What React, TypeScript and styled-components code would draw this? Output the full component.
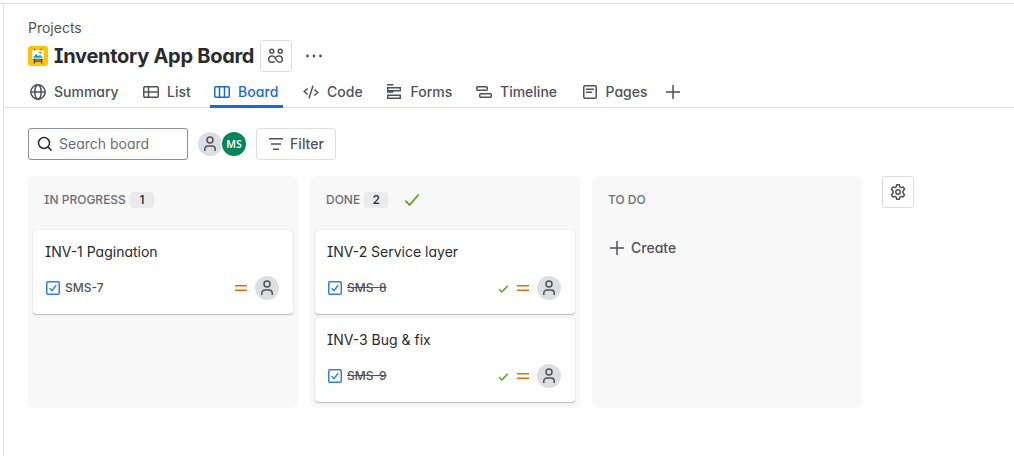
import React from 'react';
import styled, { createGlobalStyle } from 'styled-components';

const GlobalStyle = createGlobalStyle`
  *, *::before, *::after { box-sizing: border-box; }
  body {
    margin: 0;
    background: #fff;
    color: #292a2e;
    font-family: Inter, "Liberation Sans", sans-serif;
    font-feature-settings: 'cv11' 1, 'cv08' 1;
    font-size: 14px;
    line-height: 20px;
  }
  svg { display: block; flex: none; }
`;

const Page = styled.div`
  height: 456px;
  padding-top: 3px;
  overflow: hidden;
`;

const Shell = styled.div`
  height: 453px;
  border-top: 1px solid #dddee1;
  padding-left: 3px;
`;

const Main = styled.main`
  height: 452px;
  border-left: 1px solid #dddee1;
`;

const Header = styled.header`
  padding: 14px 0 0 24px;
  border-bottom: 1px solid #dddee1;
  height: 104px;
`;

const Label = styled.span<{ $track?: number }>`
  letter-spacing: ${(p) => p.$track ?? 0}px;
  white-space: nowrap;
`;

const Breadcrumb = styled.div`
  height: 20px;
  color: #505258;
`;

const TitleRow = styled.div`
  display: flex;
  align-items: center;
  height: 32px;
  margin-top: 2px;
`;

const Title = styled.h1`
  width: 206px;
  margin: 0 0 0 6px;
  font-size: 20px;
  line-height: 24px;
  font-weight: 650;
  white-space: nowrap;
`;

const IconButton = styled.button`
  display: flex;
  align-items: center;
  justify-content: center;
  width: 32px;
  height: 32px;
  padding: 0;
  background: #fff;
  border: 1px solid #dddee1;
  border-radius: 3px;
  color: #505258;
`;

const More = styled.div`
  margin-left: 14px;
  color: #505258;
`;

const Tabs = styled.nav`
  display: flex;
  height: 36px;
  margin-left: -2px;
`;

const Tab = styled.a<{ $width: number; $active?: boolean }>`
  display: flex;
  align-items: center;
  gap: 8px;
  width: ${(p) => p.$width}px;
  height: 36px;
  padding: 4px 0 0 4px;
  font-weight: 500;
  color: ${(p) => (p.$active ? '#1868db' : '#505258')};
  box-shadow: ${(p) => (p.$active ? 'inset 0 -3px #1868db' : 'none')};
  margin-right: ${(p) => (p.$active ? 16 : 0)}px;
`;

const Toolbar = styled.div`
  display: flex;
  align-items: center;
  padding: 20px 0 16px 24px;
`;

const Search = styled.div`
  display: flex;
  align-items: center;
  gap: 6px;
  width: 160px;
  height: 32px;
  padding-left: 8px;
  border: 1px solid #8c8f97;
  border-radius: 3px;
  color: #6b6e76;
`;

const Avatar = styled.div<{ $user?: boolean }>`
  display: flex;
  align-items: center;
  justify-content: center;
  width: 24px;
  height: 24px;
  border-radius: 50%;
  background: ${(p) => (p.$user ? '#048559' : '#dddee1')};
  color: ${(p) => (p.$user ? '#fff' : '#505258')};
  box-shadow: ${(p) => (p.$user ? '0 0 0 1px #fff' : 'none')};
  font: 600 10.5px/24px "Noto Sans", sans-serif;
`;

const Avatars = styled.div`
  display: flex;
  margin: 0 10px;
`;

const FilterButton = styled(IconButton)`
  width: 80px;
  gap: 6px;
  font: inherit;
  font-feature-settings: inherit;
  font-weight: 500;
`;

const Board = styled.section`
  display: flex;
  gap: 12px;
  padding-left: 24px;
`;

const Column = styled.div`
  width: 270px;
  height: 232px;
  padding: 0 5px;
  border-radius: 6px;
  background: #f8f8f8;
`;

const ColumnHead = styled.div`
  display: flex;
  align-items: center;
  height: 48px;
  margin-bottom: 6px;
  padding-left: 11px;
  font-size: 12px;
  font-weight: 500;
  color: #6b6e76;
`;

const Count = styled.span`
  width: 24px;
  height: 16px;
  margin: 0 16px 0 4px;
  border-radius: 4px;
  background: #e9eaec;
  color: #292a2e;
  line-height: 16px;
  text-align: center;
`;

const Card = styled.article`
  height: 84px;
  margin-bottom: 4px;
  padding: 12px;
  border-radius: 3px;
  background: #fff;
  box-shadow: 0 1px 1px rgba(30, 31, 33, 0.25), 0 0 1px rgba(30, 31, 33, 0.31);
`;

const CardFoot = styled.div`
  display: flex;
  align-items: center;
  height: 24px;
  margin-top: 14px;
  padding-right: 2px;
`;

const Status = styled.div`
  display: flex;
  align-items: center;
  gap: 8px;
`;

const Key = styled.span<{ $done?: boolean }>`
  flex: 1;
  margin-left: 4px;
  font-size: 12px;
  font-weight: 500;
  line-height: 16px;
  color: #505258;
  span { text-decoration: ${(p) => (p.$done ? 'line-through' : 'none')}; }
`;

const Create = styled.button`
  display: flex;
  align-items: center;
  gap: 6px;
  height: 36px;
  padding: 0 0 0 12px;
  border: 0;
  background: none;
  font: inherit;
  font-feature-settings: inherit;
  font-weight: 500;
  color: #505258;
`;

const Settings = styled(IconButton)`
  margin-left: 8px;
`;

const Icon = ({ children, size = 16 }: { children: React.ReactNode; size?: number }) => (
  <svg width={size} height={size} viewBox="0 0 16 16" fill="none" stroke="currentColor" strokeWidth="1.5">
    {children}
  </svg>
);

const PersonIcon = () => (
  <Icon>
    <circle cx="8" cy="4" r="3" />
    <path d="M2.75 15v-1.8A3.2 3.2 0 0 1 5.95 10h4.1a3.2 3.2 0 0 1 3.2 3.2V15" />
  </Icon>
);

const PlusIcon = () => (
  <Icon><path d="M8 1v14M1 8h14" /></Icon>
);

const CheckIcon = ({ size }: { size: number }) => (
  <svg width={size} height={size} viewBox="0 0 16 16" fill="none" stroke="#5b9a1f" strokeWidth={size > 12 ? 1.6 : 2}>
    <path d={size > 12 ? 'M1.4 8.6 5.6 13 14.6 2.6' : 'M1.6 9.2 5.6 13 14.2 4'} />
  </svg>
);

const PriorityIcon = () => (
  <svg width="12" height="8" viewBox="0 0 12 8">
    <path d="M0 1h12v1.5H0zM0 5.5h12V7H0z" fill="#e06c00" />
  </svg>
);

const TaskIcon = () => (
  <Icon>
    <g stroke="#357de8">
      <rect x="1.75" y="1.75" width="12.5" height="12.5" rx="1" />
      <path d="m4.6 8.3 2.3 2.4 4.4-5.4" />
    </g>
  </Icon>
);

const ProjectLogo = () => (
  <svg width="20" height="20" viewBox="0 0 20 20">
    <rect width="20" height="20" rx="3" fill="#ffc400" />
    <path d="M6.6 2.8v2M13.4 2.8v2M6.4 12v5.5M13.6 12v5.5M6 15.2h8" stroke="#344563" strokeWidth="1.2" />
    <rect x="4" y="4.2" width="12" height="8.8" rx=".8" fill="#fff" />
    <path d="M5 11.8 8 8l2.2 2.2L12 9l3 2.8z" fill="#00a3bf" />
    <circle cx="12.3" cy="6.5" r="1.2" fill="#ff8b00" />
    <rect x="5" y="12.8" width="10" height=".9" fill="#344563" />
  </svg>
);

const tabs = [
  { name: 'Summary', width: 113, icon: <><circle cx="8" cy="8" r="7.2" /><ellipse cx="8" cy="8" rx="3.2" ry="7.2" /><path d="M1 8h14" /></> },
  { name: 'List', width: 71, icon: <><rect x=".75" y="2.75" width="14.5" height="10.5" rx="1.2" /><path d="M1 8h14M5.5 3v10" /></> },
  { name: 'Board', width: 73, track: 0.1, active: true, icon: <><rect x=".75" y="2.75" width="14.5" height="10.5" rx="1.2" /><path d="M5.5 3v10M10.5 3v10" /></> },
  { name: 'Code', width: 83.5, icon: <path d="M4.7 4.5 1.2 7.5l3.5 3M11.3 5.5l3.5 3-3.5 3M10 1.6 6 14.4" /> },
  { name: 'Forms', width: 89.5, icon: <path d="M0 .75h6.5M0 8h6.5M0 3.75h13.25v3H0M.75 11.25h12.5v3H.75zM.75 3.5v3" /> },
  { name: 'Timeline', width: 105.5, icon: <><rect x=".75" y="2.75" width="10.5" height="3.5" rx="1" /><rect x="3.75" y="9.75" width="11.5" height="3.5" rx="1" /></> },
  { name: 'Pages', width: 83.5, icon: <><rect x="1.75" y="1.75" width="12.5" height="12.5" rx="1.2" /><path d="M4 5.25h8M4 8.25h6" /></> },
];

const Issue = ({ title, id, done }: { title: string; id: string; done?: boolean }) => (
  <Card>
    <Label>{title}</Label>
    <CardFoot>
      <TaskIcon />
      <Key $done={done}><Label>{id}</Label></Key>
      <Status>
        {done && <CheckIcon size={11} />}
        <PriorityIcon />
        <Avatar><PersonIcon /></Avatar>
      </Status>
    </CardFoot>
  </Card>
);

export default function App() {
  return (
    <Page>
      <GlobalStyle />
      <Shell>
        <Main>
          <Header>
            <Breadcrumb><Label>Projects</Label></Breadcrumb>
            <TitleRow>
              <ProjectLogo />
              <Title><Label $track={-0.28}>Inventory App Board</Label></Title>
              <IconButton aria-label="Team">
                <Icon>
                  <circle cx="3.8" cy="3.2" r="2" />
                  <circle cx="12.2" cy="3.2" r="2" />
                  <path d="M6.6 13.4c-.6.6-1.2.85-2.1.85H3.25a2.5 2.5 0 0 1-2.5-2.5V11a3 3 0 0 1 3-3h.6c1.6 0 2.5 1 3.3 2.6l.7 1.4c.7 1.5 1.6 2.25 3.1 2.25h.3a2.5 2.5 0 0 0 2.5-2.5V11a3 3 0 0 0-3-3h-.7c-1.2 0-2 .5-2.7 1.4" />
                </Icon>
              </IconButton>
              <More>
                <svg width="16" height="16" viewBox="0 0 16 16" fill="currentColor">
                  <circle cx="1.5" cy="8" r="1.4" /><circle cx="8" cy="8" r="1.4" /><circle cx="14.5" cy="8" r="1.4" />
                </svg>
              </More>
            </TitleRow>
            <Tabs>
              {tabs.map((t) => (
                <Tab key={t.name} $width={t.width} $active={t.active}>
                  <Icon>{t.icon}</Icon>
                  <Label $track={t.track}>{t.name}</Label>
                </Tab>
              ))}
              <Tab $width={24}><PlusIcon /></Tab>
            </Tabs>
          </Header>
          <Toolbar>
            <Search>
              <svg width="16" height="16" viewBox="0 0 16 16" fill="none" stroke="#292a2e" strokeWidth="1.5">
                <circle cx="7" cy="7" r="5.5" /><path d="m11 11 3.6 3.6" />
              </svg>
              <Label>Search board</Label>
            </Search>
            <Avatars>
              <Avatar><PersonIcon /></Avatar>
              <Avatar $user>MS</Avatar>
            </Avatars>
            <FilterButton>
              <Icon><path d="M1 2.75h14M3 8h10M5 13.25h6" /></Icon>
              <Label>Filter</Label>
            </FilterButton>
          </Toolbar>
          <Board>
            <Column>
              <ColumnHead><Label>IN PROGRESS</Label><Count>1</Count></ColumnHead>
              <Issue title="INV-1 Pagination" id="SMS-7" />
            </Column>
            <Column>
              <ColumnHead><Label>DONE</Label><Count>2</Count><CheckIcon size={16} /></ColumnHead>
              <Issue title="INV-2 Service layer" id="SMS-8" done />
              <Issue title="INV-3 Bug & fix" id="SMS-9" done />
            </Column>
            <Column>
              <ColumnHead><Label>TO DO</Label></ColumnHead>
              <Create><PlusIcon /><Label>Create</Label></Create>
            </Column>
            <Settings aria-label="Board settings">
              <Icon>
                <circle cx="8" cy="8" r="2.2" />
                <path d="M6.7.75h2.6l.5 2.1 1.4.8 2.1-.6 1.3 2.25L13 6.9v2.2l1.6 1.6-1.3 2.25-2.1-.6-1.4.8-.5 2.1H6.7l-.5-2.1-1.4-.8-2.1.6-1.3-2.25L3 9.1V6.9L1.4 5.3l1.3-2.25 2.1.6 1.4-.8z" strokeLinejoin="round" />
              </Icon>
            </Settings>
          </Board>
        </Main>
      </Shell>
    </Page>
  );
}
